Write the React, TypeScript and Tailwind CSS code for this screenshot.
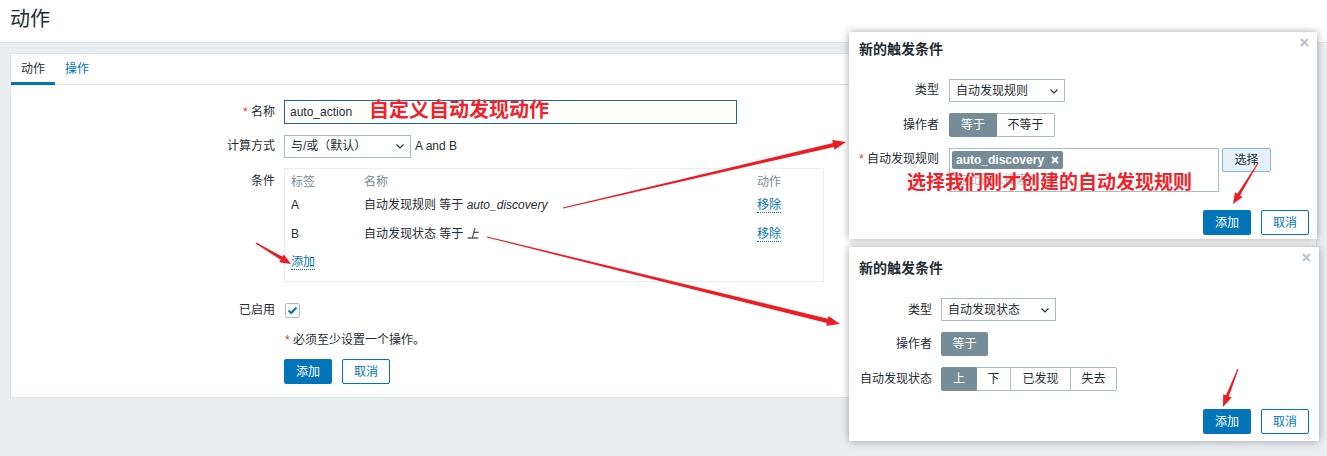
import React from 'react';

const font = { fontFamily: '"Liberation Sans", "Noto Sans CJK SC", sans-serif' };

type Pt = [number, number];

// 红色箭头：尾部细，头部粗，三角形箭头
function arrowPoints(tail: Pt, tip: Pt, w0: number, w1: number, headLen: number, headW: number) {
  const dx = tip[0] - tail[0];
  const dy = tip[1] - tail[1];
  const len = Math.hypot(dx, dy);
  const ux = dx / len;
  const uy = dy / len;
  const nx = -uy;
  const ny = ux;
  const bx = tip[0] - ux * headLen;
  const by = tip[1] - uy * headLen;
  const pts: Pt[] = [
    [tail[0] + (nx * w0) / 2, tail[1] + (ny * w0) / 2],
    [bx + (nx * w1) / 2, by + (ny * w1) / 2],
    [bx + (nx * headW) / 2, by + (ny * headW) / 2],
    tip,
    [bx - (nx * headW) / 2, by - (ny * headW) / 2],
    [bx - (nx * w1) / 2, by - (ny * w1) / 2],
    [tail[0] - (nx * w0) / 2, tail[1] - (ny * w0) / 2],
  ];
  return pts.map((p) => `${p[0].toFixed(1)},${p[1].toFixed(1)}`).join(' ');
}

const arrows: [Pt, Pt, number, number, number, number][] = [
  [[563, 208], [846, 142], 1, 4, 13, 10],
  [[487, 237], [840, 324], 1, 4.5, 13, 10],
  [[256, 243], [291, 264], 1.5, 3.5, 11, 9],
  [[1258, 163], [1233, 204], 1, 3, 11, 9],
  [[1238, 369], [1223, 407], 1, 3, 12, 9],
];

function Chevron() {
  return (
    <svg width="10" height="10" viewBox="0 0 10 10" className="shrink-0">
      <path d="M1.5 3.5 L5 7 L8.5 3.5" fill="none" stroke="#1f2c33" strokeWidth="1.1" />
    </svg>
  );
}

function Select({ value, width }: { value: string; width: string }) {
  return (
    <div className={`${width} h-[23px] border border-[#acbbc2] bg-white flex items-center justify-between pl-[6px] pr-[5px] text-[12px] text-[#1f2c33]`}>
      <span>{value}</span>
      <Chevron />
    </div>
  );
}

function BlueBtn({ children }: { children: React.ReactNode }) {
  return (
    <div className="w-[48px] h-[25px] rounded-[2px] bg-[#0275b8] text-white text-[12px] flex items-center justify-center">
      {children}
    </div>
  );
}

function OutlineBtn({ children }: { children: React.ReactNode }) {
  return (
    <div className="w-[48px] h-[25px] rounded-[2px] border border-[#0275b8] bg-white text-[#0275b8] text-[12px] flex items-center justify-center">
      {children}
    </div>
  );
}

function Link({ children }: { children: React.ReactNode }) {
  return <span className="text-[#0275b8] border-b border-dotted border-[#0275b8] leading-[14px]">{children}</span>;
}

function CloseX() {
  return (
    <svg width="9" height="9" viewBox="0 0 9 9" className="absolute right-[8px] top-[6px]">
      <path d="M1 1 L8 8 M8 1 L1 8" stroke="#b7c3ca" strokeWidth="2" />
    </svg>
  );
}

export default function App() {
  return (
    <div style={font} className="relative w-[1327px] h-[456px] bg-[#ebeef0] overflow-hidden text-[#1f2c33]">
      {/* 页头 */}
      <div className="h-[43px] bg-white border-b border-[#dfe4e7] px-[10px] pt-[5px]">
        <h1 className="text-[20px] leading-[28px] font-normal">动作</h1>
      </div>

      {/* 主面板 */}
      <div className="mt-[10px] mx-[10px] h-[345px] bg-white border border-[#dfe4e7]">
        <div className="flex h-[31px] border-b border-[#dfe4e7] text-[12px]">
          <div className="px-[10px] flex items-center border-b-[3px] border-[#0275b8] pt-[2px] mb-[-1px]">动作</div>
          <div className="px-[10px] flex items-center text-[#0275b8]">操作</div>
        </div>

        <div className="pt-[15px] text-[12px]">
          {/* 名称 */}
          <div className="flex items-center h-[24px]">
            <div className="w-[264px] text-right">
              <span className="text-[#e33734]">*</span> 名称
            </div>
            <div className="ml-[9px] w-[453px] h-[24px] border border-[#1f65a6] flex items-center px-[5px]">auto_action</div>
          </div>

          {/* 计算方式 */}
          <div className="flex items-center h-[24px] mt-[10px]">
            <div className="w-[264px] text-right">计算方式</div>
            <div className="ml-[9px] flex items-center gap-[4px]">
              <Select value="与/或（默认）" width="w-[127px]" />
              <span>A and B</span>
            </div>
          </div>

          {/* 条件 */}
          <div className="flex items-start mt-[10px]">
            <div className="w-[264px] text-right pt-[5px] leading-[17px]">条件</div>
            <div className="ml-[9px] w-[540px] border border-[#ebeef0] px-[6px] pt-[4px] pb-[4px]">
              <div className="grid grid-cols-[73px_393px_1fr] h-[17px] items-center text-[#768d99]">
                <span>标签</span>
                <span>名称</span>
                <span>动作</span>
              </div>
              <div className="grid grid-cols-[73px_393px_1fr] h-[29px] items-center">
                <span>A</span>
                <span>
                  自动发现规则 等于 <i>auto_discovery</i>
                </span>
                <span>
                  <Link>移除</Link>
                </span>
              </div>
              <div className="grid grid-cols-[73px_393px_1fr] h-[29px] items-center">
                <span>B</span>
                <span>
                  自动发现状态 等于 <i>上</i>
                </span>
                <span>
                  <Link>移除</Link>
                </span>
              </div>
              <div className="h-[29px] flex items-center">
                <Link>添加</Link>
              </div>
            </div>
          </div>

          {/* 已启用 */}
          <div className="flex items-center h-[24px] mt-[16px]">
            <div className="w-[264px] text-right">已启用</div>
            <div className="ml-[10px] w-[15px] h-[15px] border border-[#acbbc2] rounded-[2px] flex items-center justify-center">
              <svg width="11" height="9" viewBox="0 0 11 9">
                <path d="M1.5 4.5 L4.2 7 L9.5 1.5" fill="none" stroke="#0275b8" strokeWidth="2" />
              </svg>
            </div>
          </div>

          <div className="flex items-center h-[24px] mt-[6px]">
            <div className="w-[264px]" />
            <div className="ml-[10px]">
              <span className="text-[#e33734]">*</span> 必须至少设置一个操作。
            </div>
          </div>

          <div className="flex items-center mt-[7px]">
            <div className="w-[264px]" />
            <div className="ml-[9px] flex gap-[10px]">
              <BlueBtn>添加</BlueBtn>
              <OutlineBtn>取消</OutlineBtn>
            </div>
          </div>
        </div>
      </div>

      {/* 弹窗一 */}
      <div className="absolute left-[849px] top-[32px] w-[468px] h-[207px] bg-white shadow-[0_0_8px_rgba(0,0,0,0.35)] text-[12px] pl-[10px] pr-[8px]">
        <CloseX />
        <div className="pt-[9px] text-[14px] leading-[16px] font-bold">新的触发条件</div>
        <div className="grid grid-cols-[auto_1fr] gap-x-[10px] gap-y-[11px] mt-[22px] items-start">
          <div className="text-right leading-[23px]">类型</div>
          <Select value="自动发现规则" width="w-[116px]" />

          <div className="text-right leading-[24px]">操作者</div>
          <div className="flex h-[24px]">
            <div className="w-[48px] bg-[#768d99] text-white border border-[#768d99] rounded-l-[2px] flex items-center justify-center">等于</div>
            <div className="w-[58px] border border-l-0 border-[#acbbc2] rounded-r-[2px] flex items-center justify-center">不等于</div>
          </div>

          <div className="text-right leading-[22px]">
            <span className="text-[#e33734]">*</span> 自动发现规则
          </div>
          <div className="flex items-start gap-[3px]">
            <div className="w-[270px] h-[44px] border border-[#acbbc2] p-[2px]">
              <div className="inline-flex items-center gap-[7px] h-[18px] bg-[#768d99] text-white font-bold rounded-[2px] px-[4px]">
                auto_discovery
                <svg width="8" height="8" viewBox="0 0 8 8">
                  <path d="M1 1 L7 7 M7 1 L1 7" stroke="white" strokeWidth="2" />
                </svg>
              </div>
              <div className="text-[#acbbc2] mt-[3px] pl-[4px] leading-[16px]">在此输入搜索</div>
            </div>
            <div className="w-[49px] h-[24px] bg-[#e5f0f8] border border-[#7fb6dc] rounded-[2px] flex items-center justify-center">选择</div>
          </div>
        </div>
        <div className="flex justify-end gap-[10px] mt-[18px]">
          <BlueBtn>添加</BlueBtn>
          <OutlineBtn>取消</OutlineBtn>
        </div>
      </div>

      {/* 弹窗二 */}
      <div className="absolute left-[849px] top-[247px] w-[470px] h-[194px] bg-white shadow-[0_0_8px_rgba(0,0,0,0.35)] text-[12px] pl-[11px] pr-[10px]">
        <CloseX />
        <div className="pt-[13px] text-[14px] leading-[16px] font-bold -ml-[1px]">新的触发条件</div>
        <div className="grid grid-cols-[auto_1fr] gap-x-[9px] gap-y-[11px] mt-[22px] items-center">
          <div className="text-right">类型</div>
          <Select value="自动发现状态" width="w-[115px]" />

          <div className="text-right">操作者</div>
          <div className="flex h-[24px]">
            <div className="w-[47px] bg-[#768d99] text-white rounded-[2px] flex items-center justify-center">等于</div>
          </div>

          <div className="text-right">自动发现状态</div>
          <div className="flex h-[24px]">
            <div className="w-[36px] bg-[#768d99] text-white border border-[#768d99] rounded-l-[2px] flex items-center justify-center">上</div>
            <div className="w-[34px] border border-l-0 border-[#acbbc2] flex items-center justify-center">下</div>
            <div className="w-[60px] border border-l-0 border-[#acbbc2] flex items-center justify-center">已发现</div>
            <div className="w-[46px] border border-l-0 border-[#acbbc2] rounded-r-[2px] flex items-center justify-center">失去</div>
          </div>
        </div>
        <div className="flex justify-end gap-[10px] mt-[18px]">
          <BlueBtn>添加</BlueBtn>
          <OutlineBtn>取消</OutlineBtn>
        </div>
      </div>

      {/* 红色标注 */}
      <div className="absolute left-[369px] top-[97px] text-[20px] leading-[26px] font-bold text-[#f0232b]">自定义自动发现动作</div>
      <div className="absolute left-[907px] top-[171px] text-[19px] leading-[24px] font-bold text-[#f0232b]">选择我们刚才创建的自动发现规则</div>

      <svg className="absolute inset-0 pointer-events-none" width="1327" height="456">
        {arrows.map((a, i) => (
          <polygon key={i} points={arrowPoints(a[0], a[1], a[2], a[3], a[4], a[5])} fill="#ee1c25" />
        ))}
      </svg>
    </div>
  );
}
